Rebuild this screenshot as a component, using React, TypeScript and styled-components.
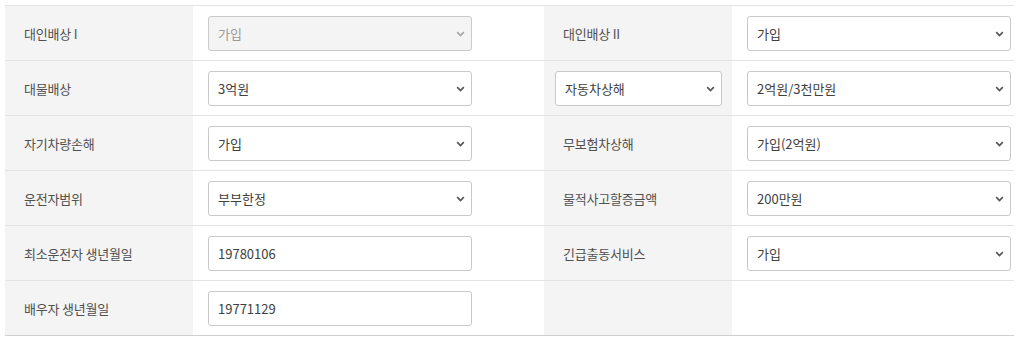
import React from 'react';
import styled, { createGlobalStyle } from 'styled-components';

const GlobalStyle = createGlobalStyle`
  html, body {
    margin: 0;
    padding: 0;
    background: #ffffff;
  }
  body {
    font-family: "Noto Sans CJK KR", "Noto Sans", sans-serif;
  }
`;

const Page = styled.div`
  padding: 5px 4px 0 5px;
`;

const Table = styled.div`
  display: grid;
  grid-template-columns: 188px 351px 188px 1fr;
  border-top: 1px solid #e3e3e3;
  border-bottom: 1px solid #cfcfcf;
`;

const Cell = styled.div<{ $label?: boolean; $last?: boolean; $inset?: boolean }>`
  height: ${({ $last }) => ($last ? '54px' : '55px')};
  display: flex;
  align-items: center;
  background: ${({ $label }) => ($label ? '#f4f4f4' : '#ffffff')};
  border-bottom: ${({ $last }) => ($last ? 'none' : '1px solid #e3e3e3')};
  padding-left: ${({ $label, $inset }) => ($inset ? '11px' : $label ? '19px' : '15px')};
  box-sizing: border-box;
`;

const Label = styled.span`
  font-size: 13px;
  color: #505050;
  letter-spacing: -0.2px;
`;

const SelectWrap = styled.div<{ $width: number }>`
  position: relative;
  width: ${({ $width }) => $width}px;
  height: 35px;
`;

const SelectBox = styled.select<{ $disabled?: boolean }>`
  appearance: none;
  -webkit-appearance: none;
  width: 100%;
  height: 100%;
  box-sizing: border-box;
  border: 1px solid #c9c9c9;
  border-radius: 3px;
  background: ${({ $disabled }) => ($disabled ? '#f4f4f4' : '#ffffff')};
  color: ${({ $disabled }) => ($disabled ? '#9a9a9a' : '#404040')};
  font-family: "Noto Sans CJK KR", "Noto Sans", sans-serif;
  font-size: 13px;
  padding: 0 28px 0 9px;
  outline: none;
  opacity: 1;
`;

const Chevron = styled.svg<{ $disabled?: boolean }>`
  position: absolute;
  right: 7px;
  top: 50%;
  width: 9px;
  height: 6px;
  margin-top: -2px;
  pointer-events: none;
  color: ${({ $disabled }) => ($disabled ? '#a8a8a8' : '#555555')};
`;

const TextInput = styled.input`
  width: 264px;
  height: 35px;
  box-sizing: border-box;
  border: 1px solid #c9c9c9;
  border-radius: 3px;
  background: #ffffff;
  color: #404040;
  font-family: "Noto Sans CJK KR", "Noto Sans", sans-serif;
  font-size: 13px;
  padding: 0 9px;
  outline: none;
`;

const Select: React.FC<{ value: string; width?: number; disabled?: boolean }> = ({
  value,
  width = 264,
  disabled,
}) => (
  <SelectWrap $width={width}>
    <SelectBox $disabled={disabled} disabled={disabled} defaultValue={value}>
      <option value={value}>{value}</option>
    </SelectBox>
    <Chevron $disabled={disabled} viewBox="0 0 9 6">
      <path d="M1.2 1.2 L4.5 4.5 L7.8 1.2" fill="none" stroke="currentColor" strokeWidth="1.7" />
    </Chevron>
  </SelectWrap>
);

const App: React.FC = () => (
  <>
    <GlobalStyle />
    <Page>
      <Table>
        <Cell $label><Label>대인배상 I</Label></Cell>
        <Cell><Select value="가입" disabled /></Cell>
        <Cell $label><Label>대인배상 II</Label></Cell>
        <Cell><Select value="가입" /></Cell>

        <Cell $label><Label>대물배상</Label></Cell>
        <Cell><Select value="3억원" /></Cell>
        <Cell $label $inset><Select value="자동차상해" width={167} /></Cell>
        <Cell><Select value="2억원/3천만원" /></Cell>

        <Cell $label><Label>자기차량손해</Label></Cell>
        <Cell><Select value="가입" /></Cell>
        <Cell $label><Label>무보험차상해</Label></Cell>
        <Cell><Select value="가입(2억원)" /></Cell>

        <Cell $label><Label>운전자범위</Label></Cell>
        <Cell><Select value="부부한정" /></Cell>
        <Cell $label><Label>물적사고할증금액</Label></Cell>
        <Cell><Select value="200만원" /></Cell>

        <Cell $label><Label>최소운전자 생년월일</Label></Cell>
        <Cell><TextInput defaultValue="19780106" /></Cell>
        <Cell $label><Label>긴급출동서비스</Label></Cell>
        <Cell><Select value="가입" /></Cell>

        <Cell $label $last><Label>배우자 생년월일</Label></Cell>
        <Cell $last><TextInput defaultValue="19771129" /></Cell>
        <Cell $label $last />
        <Cell $last />
      </Table>
    </Page>
  </>
);

export default App;
